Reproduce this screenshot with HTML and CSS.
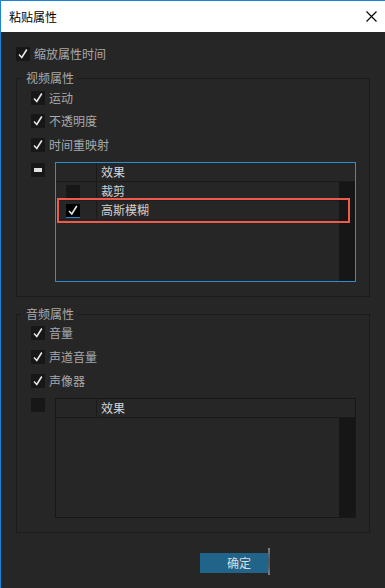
FILE: index.html
```html
<!DOCTYPE html>
<html lang="zh">
<head>
<meta charset="utf-8">
<title>粘贴属性</title>
<link rel="stylesheet" href="styles.css">
</head>
<body>
<div class="window">
  <div class="titlebar">
    <span class="title">粘贴属性</span>
    <svg class="close" width="11" height="11" viewBox="0 0 11 11"><path d="M0.5 0.5 L10.5 10.5 M10.5 0.5 L0.5 10.5" stroke="#000" stroke-width="1.1" fill="none"/></svg>
  </div>
  <div class="content">
    <div class="check-row top-row">
      <span class="box"><svg width="14" height="14" viewBox="0 0 14 14"><path d="M3 7.5 L5.8 10.5 L10.8 2.5" stroke="#e6e6e6" stroke-width="1.6" fill="none"/></svg></span>
      <span class="lbl">缩放属性时间</span>
    </div>

    <fieldset class="group video">
      <legend>视频属性</legend>
      <div class="group-body">
        <div class="check-row r1">
          <span class="box"><svg width="14" height="14" viewBox="0 0 14 14"><path d="M3 7.5 L5.8 10.5 L10.8 2.5" stroke="#e6e6e6" stroke-width="1.6" fill="none"/></svg></span>
          <span class="lbl">运动</span>
        </div>
        <div class="check-row r2">
          <span class="box"><svg width="14" height="14" viewBox="0 0 14 14"><path d="M3 7.5 L5.8 10.5 L10.8 2.5" stroke="#e6e6e6" stroke-width="1.6" fill="none"/></svg></span>
          <span class="lbl">不透明度</span>
        </div>
        <div class="check-row r3">
          <span class="box"><svg width="14" height="14" viewBox="0 0 14 14"><path d="M3 7.5 L5.8 10.5 L10.8 2.5" stroke="#e6e6e6" stroke-width="1.6" fill="none"/></svg></span>
          <span class="lbl">时间重映射</span>
        </div>
        <div class="table-row">
          <span class="box minus"><span class="dash"></span></span>
          <div class="table blue">
            <div class="thead">
              <div class="c1"></div>
              <div class="c2">效果</div>
            </div>
            <div class="tbody">
              <div class="list">
                <div class="trow">
                  <div class="c1"><span class="box small"></span></div>
                  <div class="c2">裁剪</div>
                </div>
                <div class="trow">
                  <div class="c1"><span class="box small on"><svg width="14" height="13" viewBox="0 0 14 13"><path d="M3 7 L5.8 10 L10.8 2" stroke="#e6e6e6" stroke-width="1.6" fill="none"/></svg></span></div>
                  <div class="c2">高斯模糊</div>
                </div>
              </div>
              <div class="scroll"></div>
            </div>
            <div class="highlight"></div>
          </div>
        </div>
      </div>
    </fieldset>

    <fieldset class="group audio">
      <legend>音频属性</legend>
      <div class="group-body">
        <div class="check-row r1">
          <span class="box"><svg width="14" height="14" viewBox="0 0 14 14"><path d="M3 7.5 L5.8 10.5 L10.8 2.5" stroke="#e6e6e6" stroke-width="1.6" fill="none"/></svg></span>
          <span class="lbl">音量</span>
        </div>
        <div class="check-row r2">
          <span class="box"><svg width="14" height="14" viewBox="0 0 14 14"><path d="M3 7.5 L5.8 10.5 L10.8 2.5" stroke="#e6e6e6" stroke-width="1.6" fill="none"/></svg></span>
          <span class="lbl">声道音量</span>
        </div>
        <div class="check-row r3">
          <span class="box"><svg width="14" height="14" viewBox="0 0 14 14"><path d="M3 7.5 L5.8 10.5 L10.8 2.5" stroke="#e6e6e6" stroke-width="1.6" fill="none"/></svg></span>
          <span class="lbl">声像器</span>
        </div>
        <div class="table-row">
          <span class="box"></span>
          <div class="table dark">
            <div class="thead">
              <div class="c1"></div>
              <div class="c2">效果</div>
            </div>
            <div class="tbody">
              <div class="list"></div>
              <div class="scroll"></div>
            </div>
          </div>
        </div>
      </div>
    </fieldset>

    <div class="footer">
      <button class="ok">确定</button>
    </div>
  </div>
</div>
</body>
</html>
```

FILE: styles.css
```css
* { box-sizing: border-box; }
html, body { margin: 0; padding: 0; }
body {
  width: 385px;
  height: 588px;
  overflow: hidden;
  background: #262626;
  font-family: "Noto Sans CJK SC", "Noto Sans", sans-serif;
  font-size: 12px;
}
.window {
  width: 385px;
  height: 588px;
  border-left: 1px solid #1883d7;
  border-top: 1px solid #1883d7;
  background: #262626;
  display: flex;
  flex-direction: column;
}
.titlebar {
  height: 31px;
  background: #ffffff;
  display: flex;
  align-items: center;
  justify-content: space-between;
  padding: 0 8px 0 8px;
}
.title {
  color: #000;
  font-size: 12px;
  line-height: 16px;
}
.content {
  flex: 1;
  display: flex;
  flex-direction: column;
}
.check-row {
  display: flex;
  align-items: center;
  gap: 4px;
  height: 14px;
}
.top-row { margin: 15px 0 0 15px; }
.box {
  width: 14px;
  height: 14px;
  background: #171717;
  display: flex;
  align-items: center;
  justify-content: center;
  flex: none;
}
.box svg { display: block; }
.lbl {
  color: #a9a9a9;
  line-height: 14px;
  white-space: nowrap;
}
.group {
  margin: 9px 0 0 15px;
  padding: 0;
  width: 354px;
  border: 1px solid #1b1b1b;
  min-inline-size: 0;
}
.group legend {
  margin-left: 5px;
  padding: 0 4px;
  line-height: 16px;
  color: #a9a9a9;
  font-size: 12px;
}
.group-body {
  padding: 5px 0 14px 14px;
  display: flex;
  flex-direction: column;
}
.audio .group-body { padding-top: 4px; }
.r1 { margin-bottom: 9px; }
.r2 { margin-bottom: 10px; }
.r3 { margin-bottom: 10px; }
.audio .r1 { margin-bottom: 10px; }
.table-row {
  display: flex;
  align-items: flex-start;
  gap: 10px;
}
.video .table-row .box { margin-top: 1px; }
.minus .dash {
  width: 8px;
  height: 4px;
  background: #e0e0e0;
}
.table {
  position: relative;
  width: 301px;
  height: 120px;
  display: flex;
  flex-direction: column;
}
.table.blue { border: 1px solid #2b8fd3; }
.table.dark { border: 1px solid #181818; }
.thead {
  display: flex;
  height: 19px;
  border-bottom: 1px solid #1a1a1a;
  flex: none;
}
.c1 {
  width: 41px;
  border-right: 1px solid #1a1a1a;
  flex: none;
  padding-left: 10px;
  display: flex;
  align-items: center;
}
.c2 {
  padding-left: 4px;
  color: #d6d6d6;
  line-height: 18px;
  white-space: nowrap;
}
.tbody {
  flex: 1;
  display: flex;
}
.list {
  flex: 1;
  display: flex;
  flex-direction: column;
}
.trow {
  display: flex;
  height: 19px;
  border-bottom: 1px solid #1f1f1f;
}
.trow .c2 { color: #cfcfcf; }
.box.on {
  background: #000;
  border-bottom: 1px solid #1e8ad6;
}
.scroll {
  width: 16px;
  background: #161616;
  flex: none;
}
.highlight {
  position: absolute;
  left: 1px;
  top: 35px;
  width: 293px;
  height: 25px;
  border: 2px solid #ee5a4c;
  pointer-events: none;
}
.footer {
  margin-top: 20px;
  padding-left: 199px;
  display: flex;
}
.ok {
  position: relative;
  width: 68px;
  height: 20px;
  border: none;
  background: #21648a;
  color: #dcdcdc;
  font-family: "Noto Sans CJK SC", "Noto Sans", sans-serif;
  font-size: 12px;
  padding: 0 0 0 10px;
  line-height: 20px;
}
.ok::after {
  content: "";
  position: absolute;
  left: 68px;
  top: -5px;
  width: 2px;
  height: 27px;
  background: linear-gradient(#8f979c, #4f6572 40%, #5d6a72 70%, #8d979e);
  opacity: 0.8;
}
```
